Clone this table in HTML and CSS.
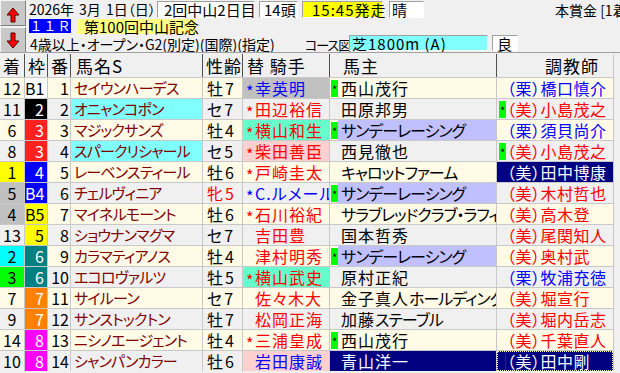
FILE: index.html
```html
<!DOCTYPE html>
<html lang="ja">
<head>
<meta charset="utf-8">
<link rel="stylesheet" href="styles.css">
</head>
<body>
<div class="top">
  <div class="btns">
    <div class="btn"><svg width="24" height="24" viewBox="0 0 24 24"><path d="M12 7 L18 14 L14 14 L14 21 L10 21 L10 14 L6 14 Z" fill="#ff0000" stroke="#500000" stroke-width="1"/></svg></div>
    <div class="btn"><svg width="24" height="24" viewBox="0 0 24 24"><path d="M12 20 L18 13 L14 13 L14 5 L10 5 L10 13 L6 13 Z" fill="#ff0000" stroke="#500000" stroke-width="1"/></svg></div>
  </div>
  <div class="info">
    <div class="line l1">
      <span class="date"><span class="d1">2026年</span><span class="d2">3月</span><span class="d3">1日（日）</span></span>
      <span class="box kai">2回中山2日目</span>
      <span class="box tou">14頭</span>
      <span class="box time">15:45発走</span>
      <span class="box ten">晴</span>
      <span class="prize">本賞金 [1着]</span>
    </div>
    <div class="line l2">
      <span class="race">１１Ｒ</span>
      <span class="rname">第100回中山記念</span>
    </div>
    <div class="line l3">
      <span class="cond">4歳以上・オープン・G2(別定)(国際)(指定)</span>
      <span class="course">コース図</span>
      <span class="box dist">芝1800m (A)</span>
      <span class="box baba">良</span>
    </div>
  </div>
</div>

<div class="tbl">
  <div class="r hdr">
    <div class="c h1">着</div><div class="c h2">枠</div><div class="c h3">番</div><div class="c h4">馬名S</div><div class="c h5">性齢</div><div class="c h6">替 騎手</div><div class="c h7">馬主</div><div class="c h8">調教師</div>
  </div>

  <div class="r o">
    <div class="c ch">12</div><div class="c wk w1">B1</div><div class="c ban">1</div><div class="c nm">セイウンハーデス</div><div class="c sx">牡7</div><div class="c jk bl bg-gy"><span class="as">*</span>幸英明</div><div class="c ow"><span class="mk">*</span><span class="ot">西山茂行</span></div><div class="c tr bl"><span class="sp"></span><span class="tt">（栗）橋口慎介</span></div>
  </div>
  <div class="r e">
    <div class="c ch">11</div><div class="c wk w2">2</div><div class="c ban">2</div><div class="c nm bg-cy">オニャンコポン</div><div class="c sx">セ7</div><div class="c jk rd"><span class="as">*</span>田辺裕信</div><div class="c ow"><span class="sp"></span><span class="ot">田原邦男</span></div><div class="c tr rd"><span class="mk">*</span><span class="tt">（美）小島茂之</span></div>
  </div>
  <div class="r o">
    <div class="c ch">6</div><div class="c wk w3">3</div><div class="c ban">3</div><div class="c nm">マジックサンズ</div><div class="c sx">牡4</div><div class="c jk rd bg-mt"><span class="as">*</span>横山和生</div><div class="c ow"><span class="mk">*</span><span class="ot lv ka">サンデーレーシング</span></div><div class="c tr bl"><span class="sp"></span><span class="tt">（栗）須貝尚介</span></div>
  </div>
  <div class="r e">
    <div class="c ch">8</div><div class="c wk w3">3</div><div class="c ban">4</div><div class="c nm bg-cy">スパークリシャール</div><div class="c sx">セ5</div><div class="c jk rd bg-pk"><span class="as">*</span>柴田善臣</div><div class="c ow"><span class="sp"></span><span class="ot">西見徹也</span></div><div class="c tr rd"><span class="mk">*</span><span class="tt">（美）小島茂之</span></div>
  </div>
  <div class="r o">
    <div class="c ch p1">1</div><div class="c wk w4">4</div><div class="c ban">5</div><div class="c nm">レーベンスティール</div><div class="c sx">牡6</div><div class="c jk rd"><span class="as">*</span>戸崎圭太</div><div class="c ow"><span class="sp"></span><span class="ot ka">キャロットファーム</span></div><div class="c tr wh bg-nv"><span class="sp"></span><span class="tt">（美）田中博康</span></div>
  </div>
  <div class="r e">
    <div class="c ch p4">5</div><div class="c wk w4">B4</div><div class="c ban">6</div><div class="c nm">チェルヴィニア</div><div class="c sx rd">牝5</div><div class="c jk bl"><span class="as">*</span>C.ルメール</div><div class="c ow"><span class="mk">*</span><span class="ot lv ka">サンデーレーシング</span></div><div class="c tr rd"><span class="sp"></span><span class="tt">（美）木村哲也</span></div>
  </div>
  <div class="r o">
    <div class="c ch p4">4</div><div class="c wk w5">B5</div><div class="c ban">7</div><div class="c nm">マイネルモーント</div><div class="c sx">牡6</div><div class="c jk rd"><span class="as">*</span>石川裕紀</div><div class="c ow"><span class="sp"></span><span class="ot ka">サラブレッドクラブ・ラフィアン</span></div><div class="c tr rd"><span class="sp"></span><span class="tt">（美）高木登</span></div>
  </div>
  <div class="r e">
    <div class="c ch">13</div><div class="c wk w5">5</div><div class="c ban">8</div><div class="c nm">ショウナンマグマ</div><div class="c sx">セ7</div><div class="c jk rd"><span class="as"></span>吉田豊</div><div class="c ow"><span class="sp"></span><span class="ot">国本哲秀</span></div><div class="c tr rd"><span class="sp"></span><span class="tt">（美）尾関知人</span></div>
  </div>
  <div class="r o">
    <div class="c ch p2">2</div><div class="c wk w6">6</div><div class="c ban">9</div><div class="c nm">カラマティアノス</div><div class="c sx">牡4</div><div class="c jk rd"><span class="as"></span>津村明秀</div><div class="c ow"><span class="mk">*</span><span class="ot lv ka">サンデーレーシング</span></div><div class="c tr rd"><span class="sp"></span><span class="tt">（美）奥村武</span></div>
  </div>
  <div class="r e">
    <div class="c ch p3">3</div><div class="c wk w6">6</div><div class="c ban">10</div><div class="c nm">エコロヴァルツ</div><div class="c sx">牡5</div><div class="c jk rd bg-mt"><span class="as">*</span>横山武史</div><div class="c ow"><span class="sp"></span><span class="ot">原村正紀</span></div><div class="c tr bl"><span class="sp"></span><span class="tt">（栗）牧浦充徳</span></div>
  </div>
  <div class="r o">
    <div class="c ch">7</div><div class="c wk w7">7</div><div class="c ban">11</div><div class="c nm">サイルーン</div><div class="c sx">セ7</div><div class="c jk rd"><span class="as"></span>佐々木大</div><div class="c ow"><span class="sp"></span><span class="ot">金子真人<span class="ka">ホールディングス</span></span></div><div class="c tr rd"><span class="sp"></span><span class="tt">（美）堀宣行</span></div>
  </div>
  <div class="r e">
    <div class="c ch">9</div><div class="c wk w7">7</div><div class="c ban">12</div><div class="c nm">サンストックトン</div><div class="c sx">牡7</div><div class="c jk rd"><span class="as"></span>松岡正海</div><div class="c ow"><span class="sp"></span><span class="ot">加藤<span class="ka">ステーブル</span></span></div><div class="c tr rd"><span class="sp"></span><span class="tt">（美）堀内岳志</span></div>
  </div>
  <div class="r o">
    <div class="c ch">14</div><div class="c wk w8">8</div><div class="c ban">13</div><div class="c nm">ニシノエージェント</div><div class="c sx">牡4</div><div class="c jk rd"><span class="as">*</span>三浦皇成</div><div class="c ow"><span class="mk">*</span><span class="ot">西山茂行</span></div><div class="c tr rd"><span class="sp"></span><span class="tt">（美）千葉直人</span></div>
  </div>
  <div class="r e">
    <div class="c ch">10</div><div class="c wk w8">8</div><div class="c ban">14</div><div class="c nm">シャンパンカラー</div><div class="c sx">牡6</div><div class="c jk bl bg-pk"><span class="as"></span>岩田康誠</div><div class="c ow wh bg-nv"><span class="sp"></span><span class="ot">青山洋一</span></div><div class="c tr wh bg-nv focus"><span class="sp"><span class="caret"></span></span><span class="tt">（美）田中剛</span></div>
  </div>
</div>
</body>
</html>
```

FILE: styles.css
```css
html, body {
  margin: 0;
  padding: 0;
  background: #f0f0f0;
  width: 620px;
  height: 373px;
  overflow: hidden;
  font-family: "Noto Sans CJK JP", "Noto Sans", sans-serif;
  font-feature-settings: "palt";
  color: #000;
}

.top {
  display: flex;
  height: 52px;
  border-bottom: 1px solid #a0a0a0;
  overflow: hidden;
  white-space: nowrap;
}

.btns {
  width: 26px;
  display: flex;
  flex-direction: column;
  gap: 1px;
  flex: none;
}

.btn {
  height: 26px;
  box-sizing: border-box;
  background: #c8c8c8;
  border: 1px solid;
  border-color: #f4f4f4 #808080 #808080 #f4f4f4;
}

.btn svg { display: block; }

.info {
  margin-left: 3px;
  display: flex;
  flex-direction: column;
  font-size: 15px;
  line-height: 15px;
}

.line { display: flex; align-items: flex-start; }

.l1 { height: 18px; margin-top: 1px; }
.l2 { height: 16px; }
.l3 { height: 17px; }

.date {
  width: 128px;
  flex: none;
  display: flex;
  padding-top: 1px;
  font-size: 14px;
}
.d2 { margin-left: 5px; }
.d3 { margin-left: 5px; }

.box {
  box-sizing: border-box;
  background: #fff;
  border: 1px solid;
  border-color: #a0a0a0 #fff #fff #a0a0a0;
  height: 17px;
  line-height: 15px;
  padding-left: 6px;
  flex: none;
}

.kai { width: 98px; }
.tou { width: 39px; margin-left: 4px; padding-left: 4px; }
.time { width: 81px; margin-left: 4px; background: #ffff00; padding-left: 9px; letter-spacing: 1px; }
.ten { width: 35px; margin-left: 6px; padding-left: 2px; }
.prize { margin-left: 131px; padding-top: 2px; font-size: 14px; }

.race {
  width: 42px;
  height: 14px;
  background: #0000ff;
  color: #fff;
  font-size: 13px;
  line-height: 14px;
  letter-spacing: 4px;
  padding-left: 2px;
  box-sizing: border-box;
}

.rname {
  margin-left: 6px;
  width: 119px;
  height: 15px;
  background: #ffff80;
  box-sizing: border-box;
  padding-left: 7px;
  line-height: 15px;
  font-size: 15px;
}

.cond {
  width: 275px;
  flex: none;
  padding-left: 1px;
  padding-top: 2px;
  font-size: 14px;
}

.course {
  width: 44px;
  flex: none;
  padding-top: 2px;
  text-decoration: underline;
  text-underline-offset: 2px;
  font-size: 13px;
  letter-spacing: -1px;
}

.dist {
  width: 139px;
  background: #80ffff;
  height: 16px;
  padding-left: 2px;
  letter-spacing: 1px;
}

.baba {
  width: 26px;
  height: 16px;
  margin-left: 4px;
  padding-left: 4px;
}

/* table */
.tbl {
  margin-top: 1px;
  width: 614px;
  box-sizing: border-box;
  padding-right: 1px;
  background: #c8c8c8;
  display: flex;
  flex-direction: column;
  gap: 1px;
}

.r {
  display: grid;
  grid-template-columns: 24px 22px 22px 131px 39px 86px 166px 116px;
  column-gap: 1px;
  height: 20px;
  font-size: 16px;
  line-height: 20px;
  letter-spacing: 1px;
}

.c {
  overflow: hidden;
  white-space: nowrap;
  position: relative;
}

.r.o > .c { background: #fffbe6; }
.r.e > .c { background: #f0f0f0; }

.r.hdr {
  height: 23px;
  background: #505050;
  font-size: 17px;
  line-height: 23px;
}
.r.hdr > .c { background: #f0f0f0; padding-left: 3px; }
.r.hdr > .h4 { padding-left: 5px; }
.r.hdr > .h6 { padding-left: 4px; white-space: pre; }
.r.hdr > .h7 { padding-left: 13px; }
.r.hdr > .h8 { padding-left: 48px; }

.ch { text-align: center; letter-spacing: 0; }
.wk { text-align: right; padding-right: 3px; color: #fff; letter-spacing: 0; }
.ban { text-align: right; padding-right: 1px; letter-spacing: 0; }
.nm { color: #800000; padding-left: 3px; font-size: 15px; letter-spacing: -0.8px; }
.sx { padding-left: 4px; letter-spacing: 2px; }
.jk { padding-left: 3px; }
.as { display: inline-block; width: 9px; letter-spacing: 0; position: relative; top: 3px; }

.ow, .tr { display: flex; align-items: stretch; }
.mk {
  flex: none;
  width: 7px;
  height: 17px;
  margin-top: 2px;
  margin-left: 1px;
  background: #00ff00;
  color: #000;
  font-size: 11px;
  line-height: 19px;
  text-align: center;
  letter-spacing: 0;
}
.tr .mk { margin-left: 2px; }
.sp { flex: none; width: 8px; position: relative; }
.tr .sp { width: 9px; }
.ot { flex: 1; padding-left: 3px; overflow: hidden; }
.tt { flex: 1; padding-left: 1px; overflow: hidden; letter-spacing: 0.5px; }
.ot.lv { background: #c0c0ff; }
.ka { letter-spacing: -1px; }

.bl { color: #0000ff; }
.rd { color: #ff0000; }
.wh { color: #fff; }

.r > .c.bg-gy { background: #c0c0c0; }
.r > .c.bg-cy { background: #80ffff; }
.r > .c.bg-mt { background: #66ffcc; }
.r > .c.bg-pk { background: #ffd0d0; }
.r > .c.bg-nv { background: #000080; }

.r > .c.p1 { background: #ffff00; }
.r > .c.p2 { background: #00ffff; }
.r > .c.p3 { background: #00ff00; }
.r > .c.p4 { background: #c0c0c0; }

.r > .c.w1 { background: #ffffff; color: #000; }
.r > .c.w2 { background: #000000; }
.r > .c.w3 { background: #ff2020; }
.r > .c.w4 { background: #0000ff; }
.r > .c.w5 { background: #ffff00; color: #000; }
.r > .c.w6 { background: #008080; }
.r > .c.w7 { background: #ff8000; }
.r > .c.w8 { background: #ff00ff; }

.focus { outline: 1px dotted #ffffa0; outline-offset: -1px; }
.caret {
  position: absolute;
  right: 0;
  top: 1px;
  bottom: 1px;
  width: 1px;
  background: #a00000;
}
```
